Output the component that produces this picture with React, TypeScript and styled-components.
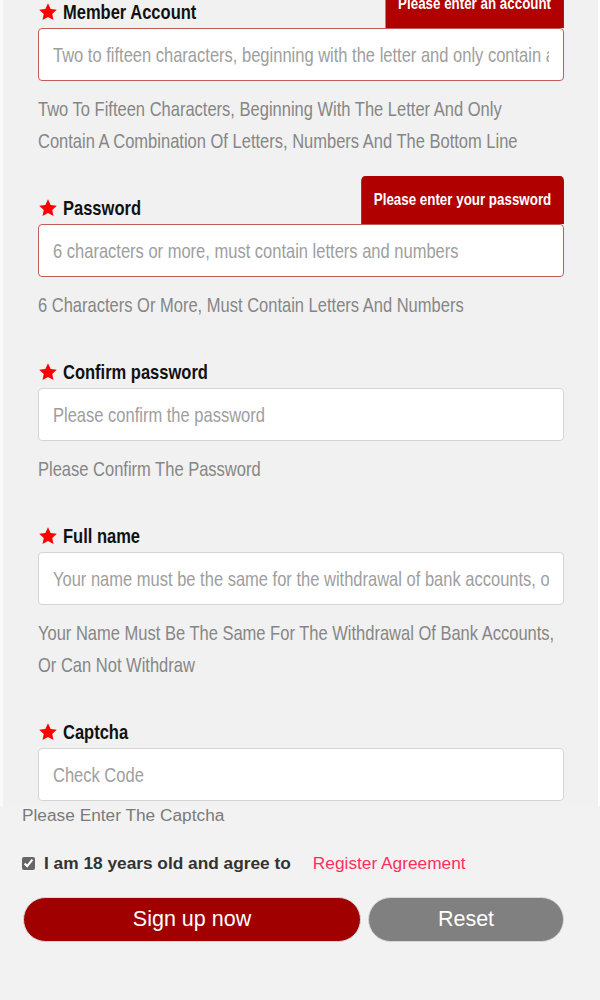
import React from "react";
import styled, { createGlobalStyle } from "styled-components";

const NARROW = 0.786;

const GlobalStyle = createGlobalStyle`
  html, body {
    margin: 0;
    padding: 0;
    background: #f2f2f2;
    font-family: "Liberation Sans", Arial, sans-serif;
  }
  * { box-sizing: border-box; }
`;

const Page = styled.div`
  width: 600px;
  min-height: 1000px;
  background: #f2f2f2;
  overflow: hidden;
`;

const Top = styled.div`
  background: #fafafa;
  padding: 0 2px 0 3px;
  box-shadow: inset -2px 0 0 #fff;
`;

const Panel = styled.div`
  background: #f1f1f1;
  padding: 0 34px 5px 35px;
`;

const Field = styled.div<{ $last?: boolean }>`
  position: relative;
  margin-bottom: ${(p) => (p.$last ? 0 : 39)}px;
`;

const LabelRow = styled.div`
  display: flex;
  align-items: center;
  height: 24px;
  margin-bottom: 4px;
  gap: 5px;
`;

const LabelText = styled.span`
  display: inline-block;
  white-space: nowrap;
  transform: scaleX(${NARROW});
  transform-origin: left center;
  font-size: 21px;
  font-weight: bold;
  color: #111;
  line-height: 24px;
`;

const Tip = styled.div`
  position: absolute;
  right: 0;
  top: -20px;
  height: 48px;
  padding: 0 16px;
  background: #b00000;
  border-radius: 5px 5px 0 0;
  display: flex;
  align-items: center;
  z-index: 2;
  transform: scaleX(${NARROW});
  transform-origin: right center;
`;

const TipText = styled.span`
  white-space: nowrap;
  color: #fff;
  font-size: 17px;
  font-weight: bold;
`;

const InputBox = styled.div<{ $error?: boolean }>`
  height: 53px;
  background: #fff;
  border: 1px solid ${(p) => (p.$error ? "#c25c5a" : "#d4d4d4")};
  border-radius: 4px;
  padding: 0 14px;
  display: flex;
  align-items: center;
  overflow: hidden;
`;

const TextInput = styled.input`
  flex: none;
  width: calc(100% / ${NARROW});
  transform: scaleX(${NARROW});
  transform-origin: left center;
  border: 0;
  outline: none;
  background: transparent;
  padding: 0;
  font-family: "Liberation Sans", Arial, sans-serif;
  font-size: 21px;
  color: #333;
  &::placeholder {
    color: #9e9e9e;
  }
`;

const Helper = styled.div`
  margin-top: 12px;
  width: calc((100% - 4px) / ${NARROW});
  transform: scaleX(${NARROW});
  transform-origin: left top;
  font-size: 21px;
  line-height: 32px;
  color: #868686;
`;

const Bottom = styled.div`
  padding: 0 22px;
`;

const CaptchaHint = styled.div`
  font-size: 17.3px;
  line-height: 18px;
  color: #7a7a7a;
`;

const AgreeRow = styled.label`
  display: flex;
  align-items: center;
  height: 20px;
  margin-top: 29px;
  font-size: 17.3px;
`;

const Check = styled.input`
  margin: 0 9px 0 0;
  width: 13px;
  height: 13px;
  accent-color: #666;
`;

const AgreeText = styled.span`
  font-weight: bold;
  color: #333;
`;

const AgreeLink = styled.a`
  margin-left: 22px;
  color: #ff2f5d;
  text-decoration: none;
`;

const Buttons = styled.div`
  display: flex;
  gap: 7px;
  margin-top: 24px;
  padding-left: 1px;
`;

const Btn = styled.button<{ $w: number; $bg: string }>`
  width: ${(p) => p.$w}px;
  height: 45px;
  border-radius: 23px;
  border: 1px solid #d8d8d8;
  background: ${(p) => p.$bg};
  color: #fff;
  font-family: "Liberation Sans", Arial, sans-serif;
  font-size: 21.5px;
  cursor: pointer;
`;

const Star = () => (
  <svg width="20" height="20" viewBox="0 0 24 24">
    <polygon
      fill="#ff0000"
      points="12,1.5 15.2,8.3 22.6,9.2 17.1,14.3 18.6,21.7 12,18 5.4,21.7 6.9,14.3 1.4,9.2 8.8,8.3"
    />
  </svg>
);

type FieldDef = {
  label: string;
  placeholder: string;
  help: string;
  tip?: string;
};

const fields: FieldDef[] = [
  {
    label: "Member Account",
    placeholder:
      "Two to fifteen characters, beginning with the letter and only contain a combination of letters, numbers and the bottom line",
    help: "Two To Fifteen Characters, Beginning With The Letter And Only Contain A Combination Of Letters, Numbers And The Bottom Line",
    tip: "Please enter an account",
  },
  {
    label: "Password",
    placeholder: "6 characters or more, must contain letters and numbers",
    help: "6 Characters Or More, Must Contain Letters And Numbers",
    tip: "Please enter your password",
  },
  {
    label: "Confirm password",
    placeholder: "Please confirm the password",
    help: "Please Confirm The Password",
  },
  {
    label: "Full name",
    placeholder:
      "Your name must be the same for the withdrawal of bank accounts, or can not withdraw",
    help: "Your Name Must Be The Same For The Withdrawal Of Bank Accounts, Or Can Not Withdraw",
  },
];

const App: React.FC = () => {
  return (
    <Page>
      <GlobalStyle />
      <Top>
        <Panel>
          {fields.map((f) => (
            <Field key={f.label}>
              <LabelRow>
                <Star />
                <LabelText>{f.label}</LabelText>
              </LabelRow>
              {f.tip && (
                <Tip>
                  <TipText>{f.tip}</TipText>
                </Tip>
              )}
              <InputBox $error={!!f.tip}>
                <TextInput placeholder={f.placeholder} />
              </InputBox>
              <Helper>{f.help}</Helper>
            </Field>
          ))}
          {/* captcha hint sits outside the panel */}
          <Field $last>
            <LabelRow>
              <Star />
              <LabelText>Captcha</LabelText>
            </LabelRow>
            <InputBox>
              <TextInput placeholder="Check Code" />
            </InputBox>
          </Field>
        </Panel>
      </Top>
      <Bottom>
        <CaptchaHint>Please Enter The Captcha</CaptchaHint>
        <AgreeRow>
          <Check type="checkbox" defaultChecked />
          <AgreeText>I am 18 years old and agree to</AgreeText>
          <AgreeLink href="#">Register Agreement</AgreeLink>
        </AgreeRow>
        <Buttons>
          <Btn type="button" $w={338} $bg="#a00000">
            Sign up now
          </Btn>
          <Btn type="button" $w={196} $bg="#808080">
            Reset
          </Btn>
        </Buttons>
      </Bottom>
    </Page>
  );
};

export default App;
